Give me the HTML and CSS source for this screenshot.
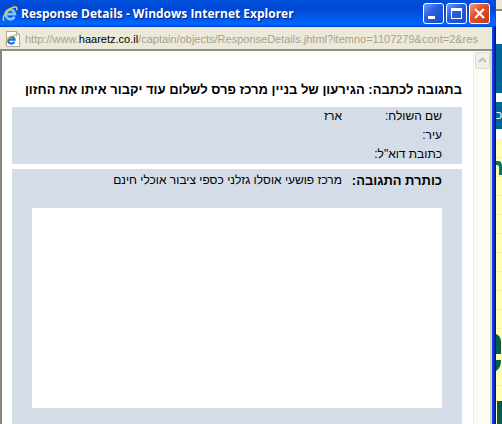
FILE: index.html
```html
<!DOCTYPE html>
<html lang="he">

<head>
    <meta charset="UTF-8">
    <meta name="viewport" content="width=device-width, initial-scale=1.0">
    <title>Response Details</title>
    <link rel="stylesheet" href="styles.css">
</head>

<body>
    <div class="window">
        <header class="title-bar">
            <svg class="ie-icon" viewBox="0 0 16 16">
                <path d="M12.4 10.6A4.6 4.8 0 1 1 12.9 8.2H5" fill="none" stroke="#7cc6f8" stroke-width="2.8"/>
                <path d="M2.2 14.8C-1 12 5 3.5 11.5 1.3c3.5-1 3.9 1 2.9 3" fill="none" stroke="#f2c84b" stroke-width="1.5"/>
            </svg>
            <h1>Response Details - Windows Internet Explorer</h1>
            <div class="window-buttons">
                <button class="win-button" aria-label="Minimize">
                    <svg viewBox="0 0 19 19"><path d="M4 12h7v3H4z" fill="#fff"/></svg>
                </button>
                <button class="win-button" aria-label="Maximize">
                    <svg viewBox="0 0 19 19"><path d="M4 4h11v11H4zM5 7v7h9V7z" fill="#fff" fill-rule="evenodd"/></svg>
                </button>
                <button class="win-button close" aria-label="Close">
                    <svg viewBox="0 0 19 19"><path d="M5 5l9 9M14 5l-9 9" stroke="#fff" stroke-width="2.2"/></svg>
                </button>
            </div>
        </header>

        <div class="address-bar">
            <svg class="page-icon" viewBox="0 0 16 16">
                <path d="M1.5.5h10l3 3v12h-13z" fill="#fff" stroke="#a9a9a0"/>
                <path d="M11.5.5v3h3" fill="none" stroke="#a9a9a0"/>
                <path d="M9.4 10.8A3.3 3.3 0 1 1 9.7 8.7H3" fill="none" stroke="#1b74d0" stroke-width="2.2"/>
                <path d="M1 13.2C0 10 4.5 5 9.5 4c2.2-.3 2 .8 1.5 1.8" fill="none" stroke="#e8b33a" stroke-width="1.2"/>
            </svg>
            <span class="url">http://www.<b>haaretz.co.il</b>/captain/objects/ResponseDetails.jhtml?itemno=1107279&amp;cont=2&amp;res</span>
        </div>

        <div class="viewport">
            <main class="page" dir="rtl">
                <h2>בתגובה לכתבה: הגירעון של בניין מרכז פרס לשלום עוד יקבור איתו את החזון</h2>
                <dl class="panel sender">
                    <dt>שם השולח:</dt>
                    <dd>ארז</dd>
                    <dt>עיר:</dt>
                    <dd></dd>
                    <dt>כתובת דוא"ל:</dt>
                    <dd></dd>
                </dl>
                <section class="panel response">
                    <dl class="subject">
                        <dt>כותרת התגובה:</dt>
                        <dd>מרכז פושעי אוסלו גזלני כספי ציבור אוכלי חינם</dd>
                    </dl>
                    <div class="response-text"></div>
                </section>
            </main>
            <div class="scrollbar">
                <button class="scroll-up" aria-label="Scroll up">
                    <svg viewBox="0 0 13 15"><path d="M3 9l3.5-3.5L10 9" fill="none" stroke="#c3c2b6" stroke-width="2"/></svg>
                </button>
            </div>
        </div>
    </div>

    <!-- the site in the window behind -->
    <aside class="behind">
        <div class="behind-toolbar"></div>
        <div class="behind-banner"></div>
        <div class="behind-menu">כ</div>
        <div class="behind-body">
            <svg viewBox="0 0 6 285">
                <path d="M0 22h2q4 0 4 5v9H3v-8q0-2-2-2H0z" fill="#0a7464"/>
                <path d="M0 195q5 2 5 8v12H0zM0 221h5q0 8-5 11z" fill="#045c50"/>
                <path d="M1 262h5v23H1z" fill="#045c50"/>
            </svg>
        </div>
    </aside>
</body>

</html>
```
FILE: styles.css
```css
* {
    margin: 0;
    padding: 0;
    box-sizing: border-box;
}

body {
    display: flex;
    height: 100vh;
    overflow: hidden;
    background: #fff;
    font-family: "Liberation Sans", Arial, sans-serif;
    font-size: 12px;
    color: #000;
}

.window {
    flex: 1;
    min-width: 0;
    display: flex;
    flex-direction: column;
    background: linear-gradient(to left, #001a8c 0, #001a8c 1px, #0831d9 2px, #1450e8 4px, #fff 4px);
}

/* Title bar */
.title-bar {
    flex: none;
    display: flex;
    align-items: center;
    gap: 3px;
    height: 27px;
    padding: 0 6px 0 2px;
    background: linear-gradient(#0050dd, #0048d4 30%, #0058ee 65%, #0066ff 90%, #0044cc);
}

.ie-icon {
    flex: none;
    width: 16px;
    height: 16px;
}

.title-bar h1 {
    flex: 1;
    font-family: "Open Sans", "Trebuchet MS", sans-serif;
    font-size: 12px;
    line-height: 16px;
    color: #fff;
    text-shadow: 1px 1px 1px #0a1f7a;
    white-space: nowrap;
}

.window-buttons {
    flex: none;
    display: flex;
    gap: 2px;
}

.win-button {
    width: 21px;
    height: 21px;
    border: 1px solid #fff;
    border-radius: 3px;
    background: linear-gradient(135deg, #6f9af5, #2a5fe0 40%, #1c48c8);
}

.win-button.close {
    background: linear-gradient(135deg, #f0a08a, #e0512c 40%, #c03a14);
}

.win-button svg,
.scroll-up svg {
    display: block;
    width: 100%;
    height: 100%;
}

/* Address bar */
.address-bar {
    flex: none;
    display: flex;
    align-items: center;
    gap: 4px;
    height: 24px;
    margin-right: 4px;
    padding-left: 5px;
    border-top: 1px solid #d8e4f4;
    border-bottom: 2px solid #8c9088;
    background: #ece9d8;
    overflow: hidden;
}

.page-icon {
    flex: none;
    width: 16px;
    height: 16px;
}

.url {
    font-family: "Liberation Sans", Tahoma, sans-serif;
    font-size: 11px;
    line-height: 16px;
    color: #a5a293;
    white-space: nowrap;
}

.url b {
    font-weight: normal;
    color: #000;
}

/* Page */
.viewport {
    flex: 1;
    min-height: 0;
    display: flex;
    margin-right: 4px;
    border-left: 2px solid #85877b;
    border-right: 2px solid #d6d3c4;
}

.page {
    flex: 1;
    min-width: 0;
    display: flex;
    flex-direction: column;
    gap: 5px;
    padding: 30px 11px 0 10px;
}

.page h2 {
    font-size: 13px;
    line-height: 18px;
    margin-bottom: 3px;
    white-space: nowrap;
}

.panel {
    background: #d4dce7;
}

.sender,
.subject {
    display: grid;
    grid-template-columns: 100px 1fr;
    line-height: 19px;
}

.sender {
    grid-auto-rows: 19px;
    padding: 0 20px;
}

.response {
    flex: 1;
    padding: 2px 20px 0;
}

.subject dt {
    font-weight: bold;
    font-size: 13px;
    white-space: nowrap;
}

.response-text {
    height: 200px;
    margin-top: 18px;
    background: #fff;
}

.scrollbar {
    flex: none;
    width: 17px;
    padding: 1px;
    border-left: 1px solid #eeede5;
    background: #fdfdf8;
}

.scroll-up {
    display: block;
    width: 15px;
    height: 17px;
    border: 1px solid #dddbd0;
    border-radius: 2px;
    background: #f0efe8;
}

/* Window behind */
.behind {
    flex: none;
    width: 6px;
    display: flex;
    flex-direction: column;
    overflow: hidden;
}

.behind-toolbar {
    flex: none;
    height: 11px;
    border-bottom: 2px solid #85877b;
    background: #ece9d8;
}

.behind-banner {
    flex: none;
    height: 49px;
    margin: 33px 0 9px;
    background: #006699;
}

.behind-menu {
    flex: none;
    height: 27px;
    margin-bottom: 10px;
    background: #006699;
    color: #fff;
    font-size: 12px;
    line-height: 27px;
}

.behind-body {
    flex: 1;
    background: repeating-linear-gradient(#ffffb3 0, #ffffb3 18px, #f5eda6 18px, #f5eda6 19px);
}

.behind-body svg {
    display: block;
    width: 6px;
    height: 285px;
}
```
